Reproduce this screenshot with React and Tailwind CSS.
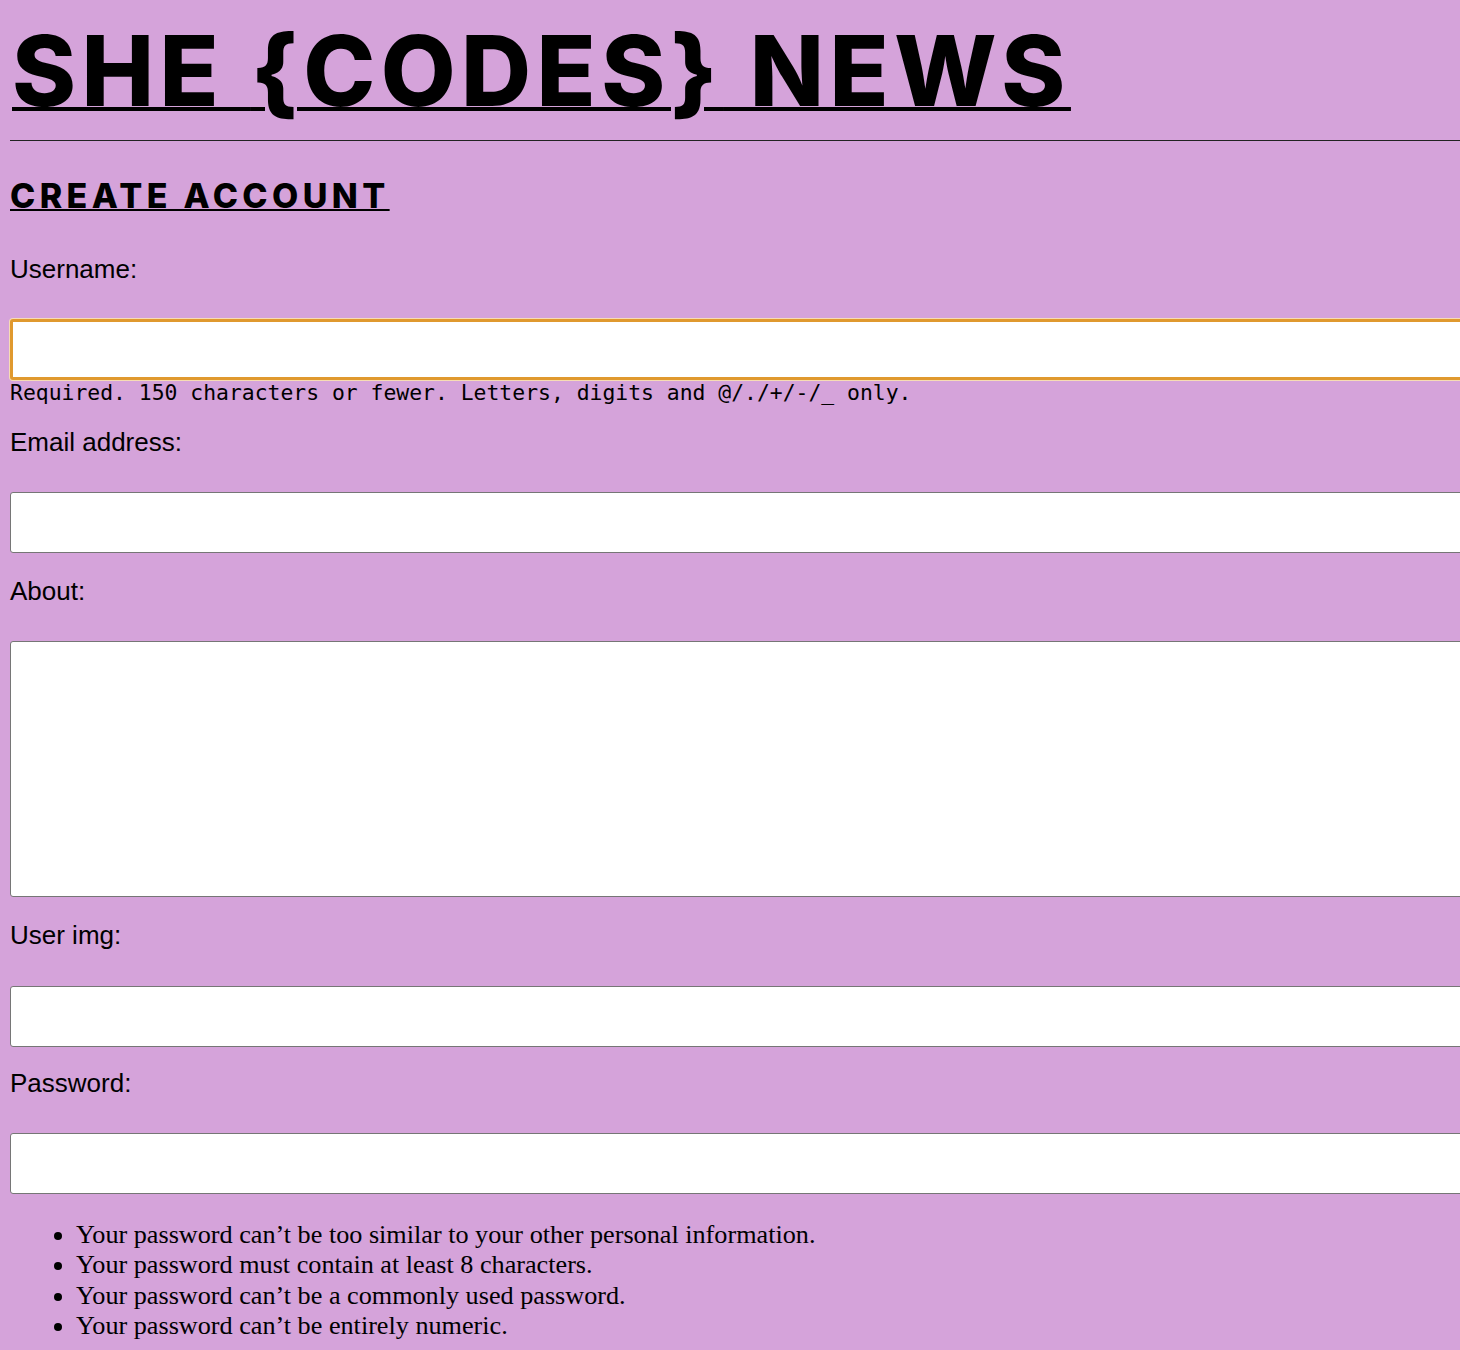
import React from "react";

function Label({ children, className = "" }) {
  return (
    <label className={`block h-[30px] leading-[30px] text-[26px] font-['Liberation_Sans',Arial,sans-serif] ${className}`}>
      {children}
    </label>
  );
}

function TextInput({ focused = false, className = "" }) {
  const base = "block w-[1520px] h-[61px] bg-white rounded-[3px] outline-none";
  const border = focused
    ? "border-[3px] border-[#e0992f] shadow-[0_0_0_1px_#f6dcb4]"
    : "border-[1.5px] border-[#767676]";
  return <input type="text" className={`${base} ${border} ${className}`} />;
}

export default function App() {
  return (
    <div className="min-h-screen overflow-hidden bg-[#d5a3da] pl-[10px] pb-[20px] text-black">
      <h1 className="mt-[22px] h-[97px] whitespace-nowrap pl-[2px] font-['Inter',sans-serif] text-[97px] font-extrabold leading-[97px] tracking-[5.4px] underline decoration-[4px] underline-offset-[1px]">
        <a href="#" className="text-black">SHE {"{CODES}"} NEWS</a>
      </h1>
      <hr className="mt-[21px] border-0 border-t border-[#222]" />
      <h2 className="mt-[38px] h-[34px] whitespace-nowrap font-['Inter',sans-serif] text-[34px] font-extrabold leading-[34px] tracking-[4.4px] underline decoration-[2px] underline-offset-[1px]">
        CREATE ACCOUNT
      </h2>

      <form className="flex flex-col">
        <Label className="mt-[41px]">Username:</Label>
        <TextInput focused className="mt-[35px]" />
        <span className="block h-[25px] font-['DejaVu_Sans_Mono',monospace] text-[21.4px] leading-[25px]">
          Required. 150 characters or fewer. Letters, digits and @/./+/-/_ only.
        </span>

        <Label className="mt-[22px]">Email address:</Label>
        <TextInput className="mt-[35px]" />

        <Label className="mt-[23px]">About:</Label>
        <textarea className="mt-[35px] block h-[256px] w-[1520px] resize-none rounded-[3px] border-[1.5px] border-[#767676] bg-white outline-none" />

        <Label className="mt-[23px]">User img:</Label>
        <TextInput className="mt-[36px]" />

        <Label className="mt-[21px]">Password:</Label>
        <TextInput className="mt-[35px]" />

        <ul className="mt-[26px] list-disc pl-[66px] font-['Liberation_Serif','Times_New_Roman',serif] text-[26.2px] leading-[30.4px]">
          <li>Your password can’t be too similar to your other personal information.</li>
          <li>Your password must contain at least 8 characters.</li>
          <li>Your password can’t be a commonly used password.</li>
          <li>Your password can’t be entirely numeric.</li>
        </ul>
      </form>
    </div>
  );
}
